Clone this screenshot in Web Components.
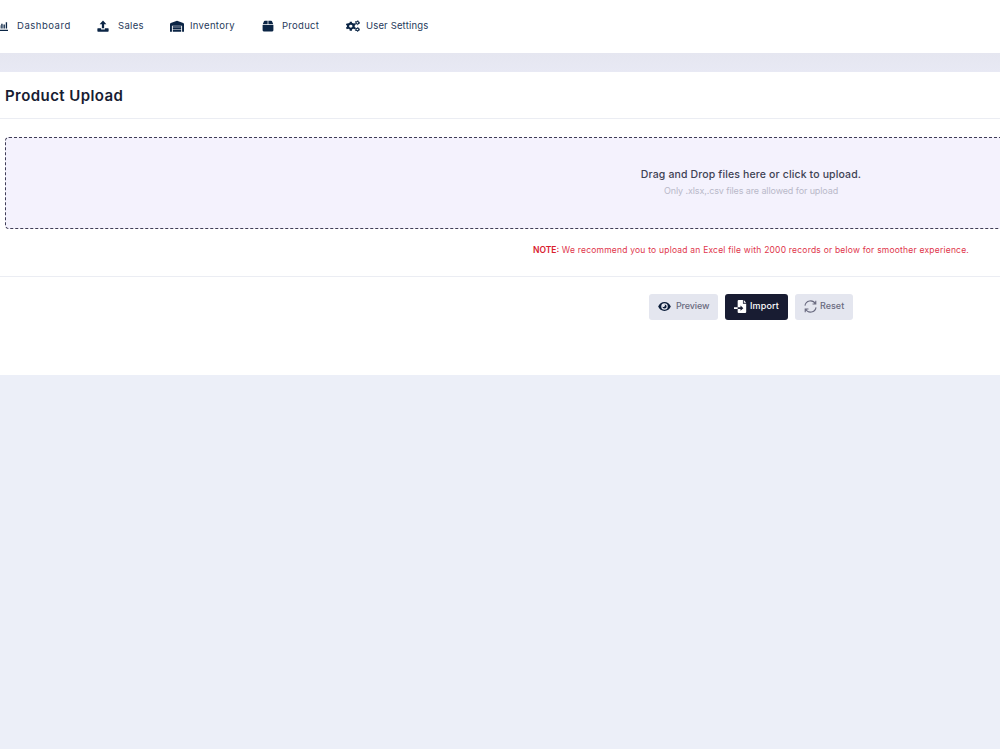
<!DOCTYPE html>
<html lang="en">
<head>
<meta charset="utf-8">
<title>Product Upload</title>
<style>
    html, body { margin: 0; height: 100%; }
    body {
        background: #fff;
        overflow: hidden;
        font-family: Inter, "Noto Sans", sans-serif;
    }
</style>
</head>
<body>
<upload-app></upload-app>

<script>
const ICONS = {
    chart: '<path d="M1 1v12.700h15" fill="none" stroke="currentColor" stroke-width="1.700"/><path d="M4 7h1.800v4.200H4zM7 5h1.800v6.200H7zM10 6h1.800v5.200H10zM13 3h1.800v8.200H13z"/>',
    upload: '<path d="M8 .5L12.500 5.500H9.500v5.500h-3V5.500H3.500z"/><path d="M1.200 11H5.500v1.800h5V11h4.300a.7.7 0 0 1 .7.7v2.900a.9.9 0 0 1-.9.9H1.400a.9.9 0 0 1-.9-.9v-2.900a.7.7 0 0 1 .7-.7z"/>',
    warehouse: '<path d="M0 5.500a1.500 1.500 0 0 1 .9-1.400L8 1l7.100 3.100a1.500 1.500 0 0 1 .9 1.400V15.500h-2.200V7.600H2.200v7.900H0z"/><path d="M3.200 8.300h9.600v1.900H3.200zM3.200 10.800h9.600v1.900H3.200zM3.200 13.300h9.600v2.200H3.200z"/>',
    box: '<path d="M7.500 1v4.800H1L2.500 1.900A1.400 1.400 0 0 1 3.800 1zM8.500 1h3.700a1.400 1.400 0 0 1 1.300.9L15 5.800H8.500zM.8 6.800h14.400v7a1.500 1.500 0 0 1-1.500 1.500H2.300A1.500 1.500 0 0 1 .8 13.800z"/>',
    gears: '<circle cx="5.500" cy="8.300" r="3.200" fill="none" stroke="currentColor" stroke-width="2.600"/><path d="M5.500 2.300v2.200M5.500 12.100v2.200M.4 5.300l1.900 1.100M8.700 10.200l1.900 1.100M.4 11.300l1.900-1.100M8.700 6.400l1.900-1.100" stroke="currentColor" stroke-width="2.600"/><g fill="none" stroke="currentColor"><circle cx="13" cy="3.600" r="1.700" stroke-width="1.400"/><circle cx="13" cy="12.600" r="1.700" stroke-width="1.400"/><circle cx="13" cy="3.600" r="2.600" stroke-dasharray="1.361 1.361"/><circle cx="13" cy="12.600" r="2.600" stroke-dasharray="1.361 1.361"/></g>',
    eye: '<path fill-rule="evenodd" d="M8 2.600c3.600 0 6.500 2.300 7.800 5.400-1.300 3.100-4.200 5.400-7.800 5.400S1.500 11.100.2 8C1.500 4.900 4.400 2.600 8 2.600zM8 4a4 4 0 1 0 0 8 4 4 0 0 0 0-8z"/><path d="M8 5.400A2.600 2.600 0 1 1 5.400 8 1.500 1.500 0 0 0 8 5.400z"/>',
    fileImport: '<path d="M4.500 1.300A1.300 1.300 0 0 1 5.800 0H11v4.500h4v10.200a1.300 1.300 0 0 1-1.300 1.300H5.800a1.300 1.300 0 0 1-1.300-1.300V11H8v2.300L11.500 10 8 6.700V9H4.500zM12 0l3 3.500h-3zM0 9h4.500v2H0z"/>',
    reset: '<g fill="none" stroke="currentColor" stroke-width="1.350"><path d="M1.200 7A6.900 6.900 0 0 1 14 4.600M14.800 9A6.900 6.900 0 0 1 2 11.400M14.500 1v4h-4M1.500 15v-4h4"/></g>'
};

class AppIcon extends HTMLElement {
    constructor() {
        super();
        this.attachShadow({mode: 'open'});
    }

    connectedCallback() {
        this.shadowRoot.innerHTML = `
            <style>
                :host { display: block; flex: none; width: 14px; height: 14px; }
                svg { display: block; width: 100%; height: 100%; fill: currentColor; }
            </style>
            <svg viewBox="0 0 16 16" preserveAspectRatio="none">${ICONS[this.getAttribute('name')]}</svg>
        `;
    }
}

class NavItem extends HTMLElement {
    constructor() {
        super();
        this.attachShadow({mode: 'open'});
    }

    connectedCallback() {
        this.shadowRoot.innerHTML = `
            <style>
                :host {
                    display: flex;
                    align-items: center;
                    height: 16px;
                    flex: none;
                    color: #0b2545;
                }
                app-icon { width: var(--icon, 12px); height: 12px; margin-right: var(--space, 8px); }
                span {
                    color: #1f3a5b;
                    font-size: 9.5px;
                    line-height: 16px;
                    white-space: nowrap;
                    letter-spacing: var(--track, 0.3px);
                }
            </style>
            <app-icon name="${this.getAttribute('icon')}"></app-icon>
            <span><slot></slot></span>
        `;
    }
}

class NavBar extends HTMLElement {
    constructor() {
        super();
        this.attachShadow({mode: 'open'});
    }

    connectedCallback() {
        this.shadowRoot.innerHTML = `
            <style>
                :host {
                    display: flex;
                    box-sizing: border-box;
                    height: 53px;
                    padding-top: 18px;
                    background: #fff;
                }
                nav { display: grid; grid-template-columns: 101px 73px 92px 84px auto; margin-left: -4px; }
            </style>
            <nav><slot></slot></nav>
        `;
    }
}

class DropZone extends HTMLElement {
    constructor() {
        super();
        this.attachShadow({mode: 'open'});
    }

    connectedCallback() {
        this.shadowRoot.innerHTML = `
            <style>
                :host {
                    display: block;
                    box-sizing: border-box;
                    height: 92px;
                    width: 1492px;
                    padding-top: 28px;
                    border: 1px dashed #3f3d56;
                    border-radius: 4px;
                    background: #f4f2fd;
                    text-align: center;
                }
                p { margin: 0; font-size: 10.5px; line-height: 17px; color: #3f4254; font-weight: 450; letter-spacing: 0.14px; }
                small { display: block; font-size: 9px; line-height: 15px; color: #b9b9c9; letter-spacing: -0.11px; }
            </style>
            <p><slot name="title"></slot></p>
            <small><slot name="hint"></slot></small>
        `;
    }
}

class ActionButton extends HTMLElement {
    constructor() {
        super();
        this.attachShadow({mode: 'open'});
    }

    connectedCallback() {
        this.shadowRoot.innerHTML = `
            <style>
                :host { display: block; }
                button {
                    display: flex;
                    align-items: center;
                    box-sizing: border-box;
                    width: 100%;
                    height: 26px;
                    padding: 0 0 1px 9px;
                    border: 0;
                    border-radius: 3px;
                    background: #e4e6ef;
                    color: #6a6b80;
                    font: 500 9px/16px Inter, "Noto Sans", sans-serif;
                    letter-spacing: var(--track, 0);
                    white-space: nowrap;
                }
                app-icon { width: 13px; height: 13px; margin-right: var(--space, 3px); color: var(--icon-color, currentColor); }
                span { margin-top: -1px; }
                :host([primary]) button { background: #181c32; color: #fff; }
            </style>
            <button>
                <app-icon name="${this.getAttribute('icon')}"></app-icon>
                <span><slot></slot></span>
            </button>
        `;
    }
}

class UploadCard extends HTMLElement {
    constructor() {
        super();
        this.attachShadow({mode: 'open'});
    }

    connectedCallback() {
        this.shadowRoot.innerHTML = `
            <style>
                :host { display: block; height: 303px; width: 1502px; background: #fff; }
                h1 {
                    box-sizing: border-box;
                    height: 47px;
                    margin: 0;
                    padding: 1px 0 0 5px;
                    border-bottom: 1px solid #ebedf3;
                    color: #181c32;
                    font-size: 15px;
                    font-weight: 600;
                    line-height: 46px;
                    letter-spacing: 0.43px;
                }
                .body { box-sizing: border-box; height: 158px; padding: 18px 5px 0; border-bottom: 1px solid #ebedf3; }
                .note {
                    margin: 13px 0 0;
                    text-align: center;
                    font-size: 8.5px;
                    line-height: 16px;
                    color: #e0354b;
                    letter-spacing: 0.21px;
                }
                .note b { font-weight: 600; color: #d9202e; letter-spacing: 0; }
                .actions {
                    display: grid;
                    grid-template-columns: 69px 63px 58px;
                    justify-content: center;
                    gap: 7px;
                    padding-top: 17px;
                }
            </style>
            <h1><slot name="heading"></slot></h1>
            <div class="body">
                <slot name="drop"></slot>
                <p class="note"><b>NOTE:</b> We recommend you to upload an Excel file with 2000 records or below for smoother experience.</p>
            </div>
            <div class="actions"><slot></slot></div>
        `;
    }
}

class UploadApp extends HTMLElement {
    constructor() {
        super();
        this.attachShadow({mode: 'open'});
    }

    connectedCallback() {
        this.shadowRoot.innerHTML = `
            <style>
                :host { display: block; height: 749px; overflow: hidden; background: #eceff8; }
                main { padding-top: 19px; background: linear-gradient(#e5e6f0, #e8e9f4 19px, transparent 19px); }
            </style>
            <nav-bar>
                <nav-item icon="chart" style="--track: 0.53px; --space: 9px">Dashboard</nav-item>
                <nav-item icon="upload" style="--space: 9px">Sales</nav-item>
                <nav-item icon="warehouse" style="--icon: 14px; --space: 6px">Inventory</nav-item>
                <nav-item icon="box">Product</nav-item>
                <nav-item icon="gears" style="--icon: 14px; --space: 6px; --track: 0.16px">User Settings</nav-item>
            </nav-bar>
            <main>
                <upload-card>
                    <span slot="heading">Product Upload</span>
                    <drop-zone slot="drop">
                        <span slot="title">Drag and Drop files here or click to upload.</span>
                        <span slot="hint">Only .xlsx,.csv files are allowed for upload</span>
                    </drop-zone>
                    <action-button icon="eye" style="--icon-color: #0b1d3a; --space: 5px; --track: -0.15px">Preview</action-button>
                    <action-button icon="fileImport" primary style="--track: 0.15px">Import</action-button>
                    <action-button icon="reset">Reset</action-button>
                </upload-card>
            </main>
        `;
    }
}

customElements.define('app-icon', AppIcon);
customElements.define('nav-item', NavItem);
customElements.define('nav-bar', NavBar);
customElements.define('drop-zone', DropZone);
customElements.define('action-button', ActionButton);
customElements.define('upload-card', UploadCard);
customElements.define('upload-app', UploadApp);
</script>
</body>
</html>
